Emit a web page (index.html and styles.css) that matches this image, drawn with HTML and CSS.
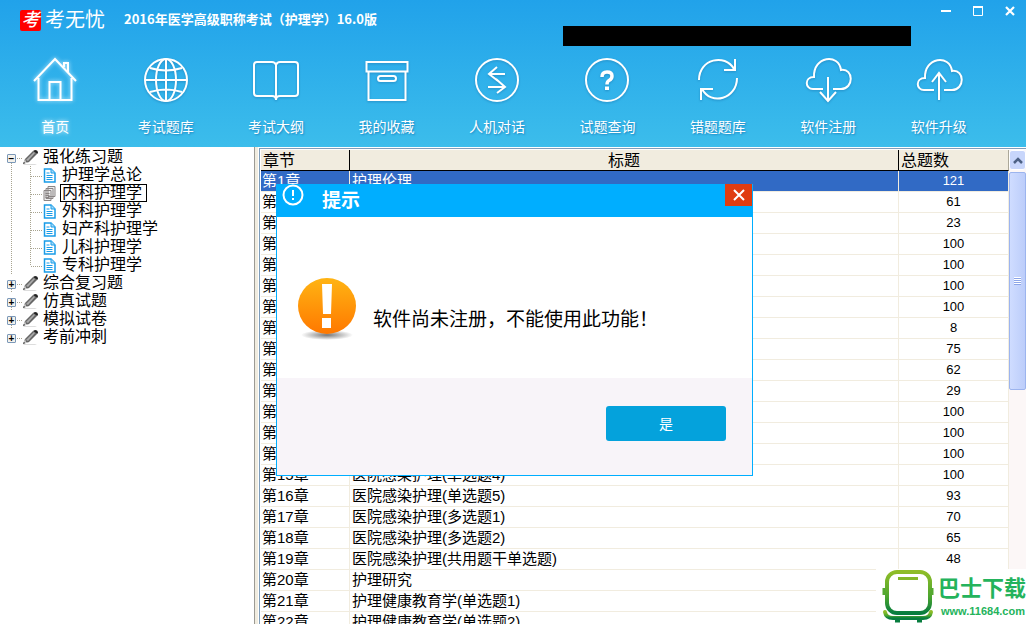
FILE: index.html
```html
<!DOCTYPE html>
<html lang="zh-CN">
<head>
<meta charset="utf-8">
<title>考无忧</title>
<link rel="stylesheet" href="styles.css">
</head>
<body>
<header class="header">
  <div class="titlebar">
    <div class="brand"><span class="brand-mark">考</span><span class="brand-name">考无忧</span></div>
    <h1 class="app-title">2016年医学高级职称考试（护理学）16.0版</h1>
    <div class="blackout"></div>
    <div class="window-controls">
      <button type="button" aria-label="最小化"><svg width="12" height="12"><path d="M1 6h10" stroke="#fff" stroke-width="2"/></svg></button>
      <button type="button" aria-label="最大化"><svg width="12" height="12"><path d="M1.500 2v8.500h9V2" fill="none" stroke="#fff"/><path d="M1 2h10" stroke="#fff" stroke-width="2"/></svg></button>
      <button type="button" aria-label="关闭"><svg width="12" height="12"><path d="M2 2l8 8M10 2l-8 8" stroke="#fff" stroke-width="2.200"/></svg></button>
    </div>
  </div>
  <nav class="nav">
    <a class="nav-item active" href="#"><svg viewBox="0 0 48 48"><path d="M3 25L24 3l21 22M7.500 22v22h33V22M18.500 44V26h11v18M33 11V7h4v9"/></svg>首页</a>
    <a class="nav-item" href="#"><svg viewBox="0 0 48 48"><circle cx="24" cy="24" r="21"/><ellipse cx="24" cy="24" rx="10" ry="21"/><path d="M24 3v42M3 24h42M8 12q16 5 32 0M8 36q16-5 32 0"/></svg>考试题库</a>
    <a class="nav-item" href="#"><svg viewBox="0 0 48 48"><path d="M24 9q-1-3-4-3H5Q2 6 2 9v28q0 3 3 3h15q4 0 4 4 0-4 4-4h15q3 0 3-3V9q0-3-3-3H28q-3 0-4 3v35"/></svg>考试大纲</a>
    <a class="nav-item" href="#"><svg viewBox="0 0 48 48"><path d="M3.500 6h41v9.500h-41zM5.500 15.500V44h37V15.500"/><rect x="15" y="20" width="18" height="5" rx="2.500"/></svg>我的收藏</a>
    <a class="nav-item" href="#"><svg viewBox="0 0 48 48"><circle cx="24" cy="24" r="21"/><path d="M32 18H16M24 11l-8 7 9 7M15 31h17M23 23l9 8-8 6"/></svg>人机对话</a>
    <a class="nav-item" href="#"><svg viewBox="0 0 48 48"><circle cx="24" cy="24" r="21"/><path stroke-width="3.500" d="M19 21q0-5 5-5t5 4q0 3-3 4.500-2 1-2 4"/><path stroke-width="4" d="M24 30.500v3.500"/></svg>试题查询</a>
    <a class="nav-item" href="#"><svg viewBox="0 0 48 48"><path d="M5 24C5 3 31-3 40 13M41 3v11H30M43 22c0 21-26 28-35 11M7 44V33h12"/></svg>错题题库</a>
    <a class="nav-item" href="#"><svg viewBox="0 0 48 48"><path d="M19 33H9c-8 0-9-12 1-12C9 0 35-3 37 14c13-2 13 19 0 19h-8M24 21v24M16 36l8 9 8-9"/></svg>软件注册</a>
    <a class="nav-item" href="#"><svg viewBox="0 0 48 48"><path d="M19 34H9c-8 0-9-12 1-12C9 1 35-2 37 15c13-2 13 19 0 19h-8M24 44V18M17 26l7-9 7 9"/></svg>软件升级</a>
  </nav>
</header>

<svg class="defs" width="0" height="0" aria-hidden="true">
  <symbol id="pencil" viewBox="0 0 17 17"><path d="M2 15h11l2 1H1z" fill="#ddd"/><path d="M1 15l2-5 8-8 4 3-8 8z" fill="#666"/><path d="M4 11l8-8 1 1-7 8z" fill="#aaa"/><path d="M11 2l2-1q3 0 3 3l-1 1z" fill="#222"/><path d="M1 15l2-5 1 3 3 0z" fill="#ccc"/><path d="M1 15l1-2 1 1z" fill="#222"/></symbol>
  <symbol id="page" viewBox="0 0 13 15"><path d="M1.500 1H8l4 4v9H1.500z" fill="#fff" stroke="#189ce8" stroke-width="1.500"/><path d="M8 1v4h4" fill="#a5daf8" stroke="#189ce8"/><path d="M3.500 5h3M3.500 7.500h6M3.500 9.500h6M3.500 11.500h6" stroke="#189ce8"/></symbol>
  <symbol id="pages" viewBox="0 0 13 15"><path d="M5 .500h7v10H5zM3 2.500h7v10H3zM1 4.500h7v10H1z" fill="#eee" stroke="#8a8585"/><path d="M2.500 7.500h4M2.500 9.500h4M2.500 11.500h4" stroke="#8a8585"/></symbol>
</svg>

<main class="main">
  <aside class="sidebar">
    <ul class="tree">
      <li><div class="node"><button type="button" class="toggle" aria-label="折叠">−</button><svg class="pencil"><use href="#pencil"/></svg><span>强化练习题</span></div>
        <ul class="branch">
          <li><svg class="page"><use href="#page"/></svg><span>护理学总论</span></li>
          <li><svg class="page"><use href="#pages"/></svg><span class="selected">内科护理学</span></li>
          <li><svg class="page"><use href="#page"/></svg><span>外科护理学</span></li>
          <li><svg class="page"><use href="#page"/></svg><span>妇产科护理学</span></li>
          <li><svg class="page"><use href="#page"/></svg><span>儿科护理学</span></li>
          <li><svg class="page"><use href="#page"/></svg><span>专科护理学</span></li>
        </ul>
      </li>
      <li><div class="node"><button type="button" class="toggle" aria-label="展开">+</button><svg class="pencil"><use href="#pencil"/></svg><span>综合复习题</span></div></li>
      <li><div class="node"><button type="button" class="toggle" aria-label="展开">+</button><svg class="pencil"><use href="#pencil"/></svg><span>仿真试题</span></div></li>
      <li><div class="node"><button type="button" class="toggle" aria-label="展开">+</button><svg class="pencil"><use href="#pencil"/></svg><span>模拟试卷</span></div></li>
      <li><div class="node"><button type="button" class="toggle" aria-label="展开">+</button><svg class="pencil"><use href="#pencil"/></svg><span>考前冲刺</span></div></li>
    </ul>
  </aside>
  <div class="splitter"></div>
  <section class="list">
    <table class="chapters">
      <colgroup><col class="col-chapter"><col><col class="col-total"></colgroup>
      <thead><tr><th>章节</th><th class="center">标题</th><th>总题数</th></tr></thead>
      <tbody>
        <tr class="current"><td>第1章</td><td>护理伦理</td><td>121</td></tr>
        <tr><td>第2章</td><td></td><td>61</td></tr>
        <tr><td>第3章</td><td></td><td>23</td></tr>
        <tr><td>第4章</td><td></td><td>100</td></tr>
        <tr><td>第5章</td><td></td><td>100</td></tr>
        <tr><td>第6章</td><td></td><td>100</td></tr>
        <tr><td>第7章</td><td></td><td>100</td></tr>
        <tr><td>第8章</td><td></td><td>8</td></tr>
        <tr><td>第9章</td><td></td><td>75</td></tr>
        <tr><td>第10章</td><td></td><td>62</td></tr>
        <tr><td>第11章</td><td></td><td>29</td></tr>
        <tr><td>第12章</td><td></td><td>100</td></tr>
        <tr><td>第13章</td><td></td><td>100</td></tr>
        <tr><td>第14章</td><td></td><td>100</td></tr>
        <tr><td>第15章</td><td>医院感染护理(单选题4)</td><td>100</td></tr>
        <tr><td>第16章</td><td>医院感染护理(单选题5)</td><td>93</td></tr>
        <tr><td>第17章</td><td>医院感染护理(多选题1)</td><td>70</td></tr>
        <tr><td>第18章</td><td>医院感染护理(多选题2)</td><td>65</td></tr>
        <tr><td>第19章</td><td>医院感染护理(共用题干单选题)</td><td>48</td></tr>
        <tr><td>第20章</td><td>护理研究</td><td></td></tr>
        <tr><td>第21章</td><td>护理健康教育学(单选题1)</td><td></td></tr>
        <tr><td>第22章</td><td>护理健康教育学(单选题2)</td><td></td></tr>
      </tbody>
    </table>
    <div class="scrollbar">
      <button type="button" class="scroll-up" aria-label="向上滚动"><svg width="10" height="7"><path d="M1 6l4-4 4 4" fill="none" stroke="#4d6185" stroke-width="2.500"/></svg></button>
      <div class="scroll-thumb"><span class="grip"></span></div>
    </div>
  </section>

  <section class="dialog" role="dialog" aria-labelledby="dialog-title">
    <div class="dialog-head">
      <svg class="dialog-icon" viewBox="0 0 22 22"><circle cx="11" cy="11" r="9.500" fill="none" stroke="#fff" stroke-width="2"/><path d="M11 6v6M11 14v2" stroke="#fff" stroke-width="2"/></svg>
      <h2 id="dialog-title">提示</h2>
      <button type="button" class="dialog-close" aria-label="关闭"><svg width="14" height="14"><path d="M2 2l10 10M12 2L2 12" stroke="#fff" stroke-width="2"/></svg></button>
    </div>
    <div class="dialog-body">
      <svg class="warning" viewBox="0 0 60 64">
        <defs>
          <linearGradient id="orange" x1="0" y1="0" x2="0" y2="1"><stop offset="0" stop-color="#ffb413"/><stop offset="1" stop-color="#ff7800"/></linearGradient>
          <radialGradient id="shade"><stop offset="0" stop-color="#777"/><stop offset="1" stop-color="#777" stop-opacity="0"/></radialGradient>
        </defs>
        <ellipse cx="30" cy="57" rx="26" ry="5" fill="url(#shade)"/>
        <ellipse cx="30" cy="28" rx="29" ry="28" fill="url(#orange)"/>
        <path d="M25 6h10l-1 30h-8zM25 40h9v10h-9z" fill="#fff"/>
      </svg>
      <p>软件尚未注册，不能使用此功能！</p>
    </div>
    <div class="dialog-foot"><button type="button" class="confirm">是</button></div>
  </section>

  <a class="site-badge" href="#">
    <svg width="52" height="54" viewBox="0 0 52 54">
      <defs><linearGradient id="bus" x1="0" y1="0" x2="0" y2="1"><stop offset="0" stop-color="#8fbd28"/><stop offset=".6" stop-color="#4ca52f"/><stop offset="1" stop-color="#087d3f"/></linearGradient></defs>
      <g fill="none" stroke="url(#bus)" stroke-linecap="round">
        <rect x="5" y="3" width="43" height="41" rx="10" stroke-width="4"/>
        <path d="M3 43q1 6 8 6h30q7 0 8-6" stroke-width="4"/>
      </g>
      <path d="M16 9.500h20" stroke="#84b829" stroke-width="3"/>
      <path d="M2 19v7M50 19v7" stroke="#55a932" stroke-width="3"/>
      <path d="M13 52h5M35 52h5" stroke="#087d3f" stroke-width="3"/>
    </svg>
    <span class="site-text"><span class="site-name">巴士下载</span><span class="site-url">www.11684.com</span></span>
  </a>
</main>
</body>
</html>
```
FILE: styles.css
```css
* { box-sizing: border-box; }
body {
  margin: 0;
  height: 100vh;
  display: flex;
  flex-direction: column;
  overflow: hidden;
  background: #fff;
  color: #000;
  font: 16px/18px "Liberation Sans", "Noto Sans CJK SC", sans-serif;
}
h1, h2, p, ul { margin: 0; padding: 0; }
ul { list-style: none; }
button { margin: 0; padding: 0; border: 0; background: none; font: inherit; color: inherit; }
a { color: inherit; text-decoration: none; }
svg { display: block; flex: none; }
.defs { position: absolute; }

.header { flex: none; height: 147px; background: linear-gradient(#21a2ea, #3cbdeb); color: #fff; }
.titlebar { display: flex; align-items: flex-start; height: 54px; padding: 0 10px 0 20px; }
.brand { display: flex; align-items: center; gap: 4px; height: 40px; }
.brand-mark {
  width: 21px; height: 21px; border-radius: 2px; background: #f00;
  font-size: 18px; line-height: 20px; font-style: italic; font-weight: 500; text-align: center;
}
.brand-name { font-size: 20px; line-height: 24px; }
.app-title { margin-left: 19px; font: bold 13px/38px "Noto Sans CJK SC", sans-serif; white-space: nowrap; }
.blackout { width: 348px; height: 20px; margin: 26px 29px 0 auto; background: #000; }
.window-controls { display: flex; gap: 20px; margin-top: 5px; }

.nav { display: grid; grid-template-columns: repeat(9, 1fr); padding-right: 32px; }
.nav-item {
  display: flex; flex-direction: column; align-items: center; gap: 13px;
  font-size: 14px; line-height: 20px; text-shadow: 1px 1px 2px #1a86c0;
}
.nav-item svg { width: 48px; height: 48px; margin-top: 2px; fill: none; stroke: #fff; stroke-width: 2; filter: drop-shadow(0 1px 1px #2590c8); }
.nav-item.active { text-shadow: 0 0 4px #fff; }
.nav-item.active svg { filter: drop-shadow(0 0 2px #c5ecff); }

.main { position: relative; flex: 1; min-height: 0; display: flex; }
.sidebar { flex: none; width: 254px; padding-top: 1px; }
.splitter { flex: none; width: 5px; border-left: 1px solid #9c9a93; border-right: 1px solid #fff; background: #f1ecdf; }

.tree > li { background: repeating-linear-gradient(#a8a490 0 1px, transparent 1px 2px) 11px 9px / 1px 100% no-repeat; }
.tree > li:last-child { background-size: 1px 0; }
.node {
  display: flex; align-items: center; height: 18px; padding-left: 7px;
  background: repeating-linear-gradient(90deg, #a8a490 0 1px, transparent 1px 2px) 17px 10px / 5px 1px no-repeat;
}
.toggle {
  width: 9px; height: 9px; margin-top: 2px; border: 1px solid #7b98b8; border-radius: 1px; background: #f4f2ec;
  font-size: 10px; line-height: 7px; font-weight: bold;
}
.pencil { width: 17px; height: 17px; margin: 0 4px 0 6px; }
.branch { background: repeating-linear-gradient(#a8a490 0 1px, transparent 1px 2px) 30px 0 / 1px 100px no-repeat; }
.branch li {
  display: flex; align-items: center; gap: 4px; height: 18px; padding-left: 43px;
  background: repeating-linear-gradient(90deg, #a8a490 0 1px, transparent 1px 2px) 31px 10px / 11px 1px no-repeat;
}
.branch span { padding: 0 1px; border: 1px solid transparent; line-height: 16px; }
.branch .selected { border-color: #000; padding-right: 4px; }
.page { width: 13px; height: 15px; }

.list { flex: 1; min-width: 0; display: flex; align-items: flex-start; padding: 1px; border: solid #7f9db9; border-width: 1px 0 0 1px; margin-top: 1px; overflow: hidden; }
.chapters { flex: 1; min-width: 0; table-layout: fixed; border-collapse: separate; border-spacing: 0; font-size: 15px; }
.col-chapter { width: 89px; }
.col-total { width: 110px; }
.chapters th {
  height: 21px; padding: 2px 2px 0; border-right: 1px solid #000; border-bottom: 1px solid #000;
  background: #f1ecdf; font-size: 16px; line-height: 18px; font-weight: normal; text-align: left;
}
.chapters th.center { text-align: center; }
.chapters th:last-child { border-right-color: #aca899; }
.chapters td {
  height: 21px; padding: 0 2px; border: solid #f1ecdf; border-width: 0 1px 1px 0;
  line-height: 20px; white-space: nowrap;
}
.chapters td:first-child { padding-left: 1px; }
.chapters td:last-child { font-size: 13px; text-align: center; }
.chapters .current td { background: #316ac5; color: #fff; }

.scrollbar { flex: none; align-self: stretch; width: 17px; margin-right: -1px; background: #fcf7f7; }
.scroll-up { display: grid; place-items: center; width: 17px; height: 20px; border: 1px solid #fff; border-radius: 3px; background: #c8d6fb; }
.scroll-thumb { display: grid; place-items: center; height: 218px; margin-top: 2px; border: 1px solid #9cb4ee; border-radius: 2px; background: linear-gradient(90deg, #cfdcff, #bccdfa); }
.grip { width: 7px; height: 8px; background: repeating-linear-gradient(#fff 0 1px, #8ca5e8 1px 2px); }

.dialog { position: absolute; left: 276px; top: 37px; width: 477px; border: solid #00aeff; border-width: 0 1px 1px; background: #fff; }
.dialog-head { display: flex; align-items: flex-start; height: 33px; background: #00aeff; color: #fff; }
.dialog-icon { width: 22px; height: 22px; margin-left: 5px; }
.dialog-head h2 { margin-left: 18px; font-size: 19px; line-height: 33px; }
.dialog-close { display: grid; place-items: center; width: 27px; height: 22px; margin-left: auto; background: #e03c10; }
.dialog-body { display: flex; align-items: center; gap: 16px; height: 161px; padding: 24px 20px 0; }
.warning { width: 60px; height: 64px; }
.dialog-body p { margin-top: 20px; font-size: 19px; line-height: 24px; white-space: nowrap; }
.dialog-foot { display: flex; justify-content: flex-end; height: 97px; padding: 28px 26px; background: #f8f4f9; }
.confirm { width: 120px; height: 35px; border-radius: 3px; background: #04a2dc; color: #fff; font-size: 14px; }

.site-badge { position: absolute; right: 0; bottom: 0; display: flex; align-items: flex-start; gap: 4px; height: 55px; padding-left: 6px; background: #fff; color: #24b35c; }
.site-text { display: flex; flex-direction: column; padding-top: 6px; }
.site-name { font-size: 22px; line-height: 27px; font-weight: bold; }
.site-url { padding-left: 3px; font-weight: bold; font-size: 11px; line-height: 18px; }
```
